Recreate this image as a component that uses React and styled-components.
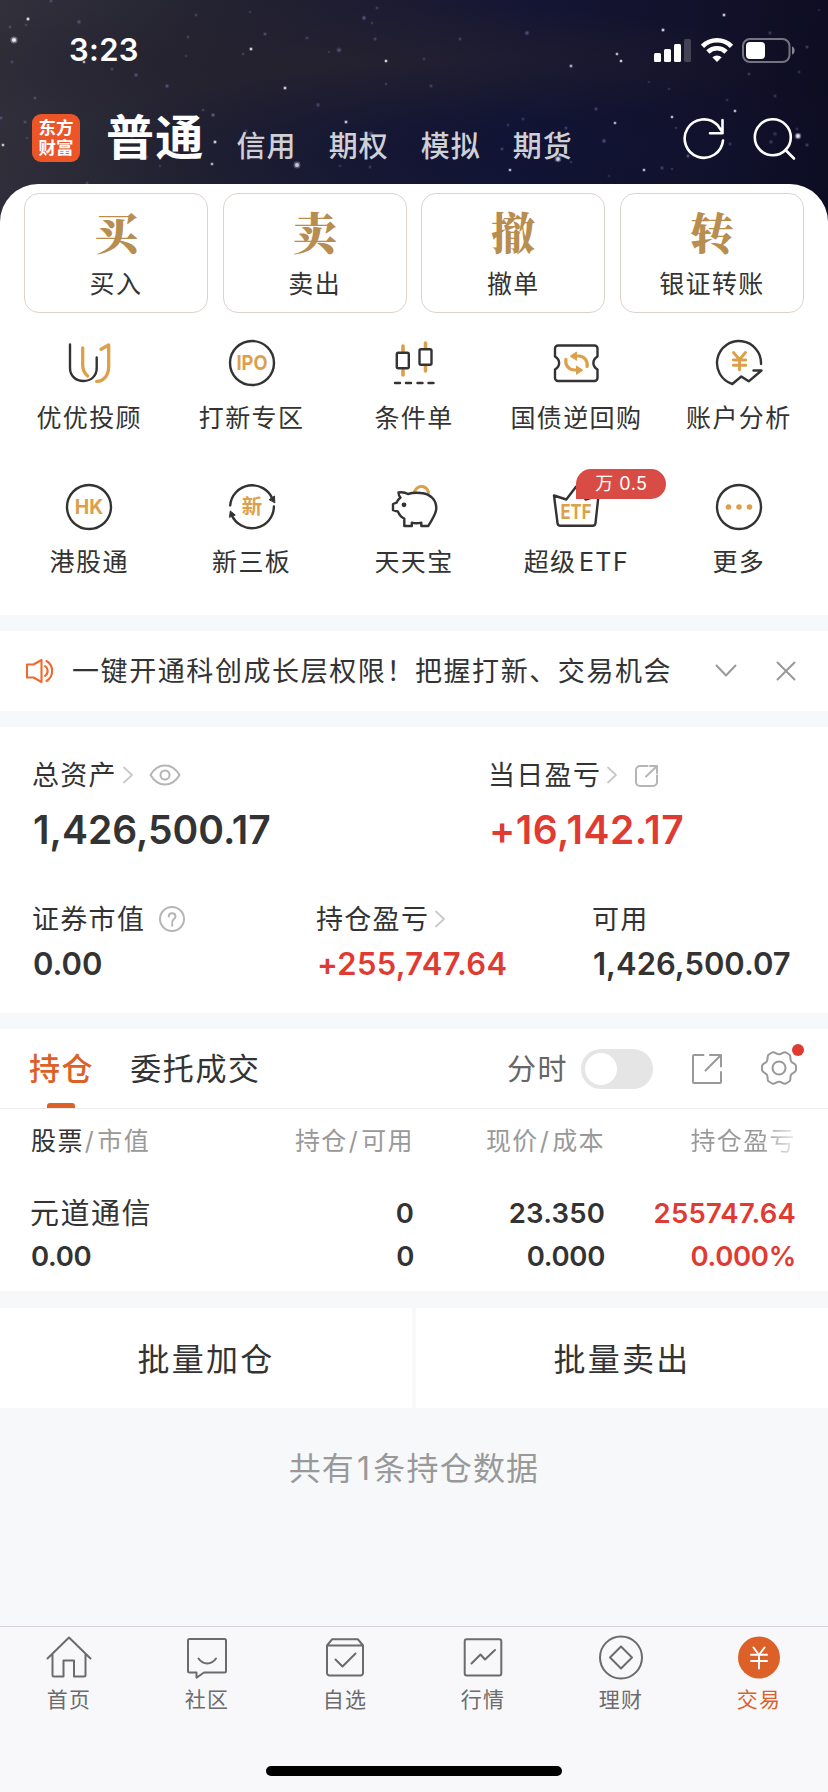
import React from "react";
import styled, { createGlobalStyle, css } from "styled-components";

// Data
const accounts = ["信用", "期权", "模拟", "期货"];

const trades = [
  { mark: "买", label: "买入" },
  { mark: "卖", label: "卖出" },
  { mark: "撤", label: "撤单" },
  { mark: "转", label: "银证转账" },
];

const services = [
  { icon: "advisor", label: "优优投顾" },
  { icon: "ipo", label: "打新专区" },
  { icon: "candle", label: "条件单" },
  { icon: "bond", label: "国债逆回购" },
  { icon: "analysis", label: "账户分析" },
  { icon: "hk", label: "港股通" },
  { icon: "neeq", label: "新三板" },
  { icon: "piggy", label: "天天宝" },
  { icon: "etf", label: "超级 ETF", badge: "万 0.5" },
  { icon: "more", label: "更多" },
];

const navItems = [
  { icon: "home", label: "首页" },
  { icon: "community", label: "社区" },
  { icon: "watchlist", label: "自选" },
  { icon: "market", label: "行情" },
  { icon: "wealth", label: "理财" },
  { icon: "trade", label: "交易", active: true },
];

// x, y, radius, opacity
const stars = [
  [14, 40, 3, 0.95], [28, 19, 1.7, 0.9], [10, 27, 1.6, 0.4], [26, 25, 1.5, 0.35],
  [51, 1, 1.8, 0.4], [79, 22, 2, 0.45], [12, 62, 1.7, 0.35], [84, 62, 1.5, 0.8],
  [112, 69, 1.6, 0.4], [136, 75, 1.9, 0.5], [167, 86, 1.9, 0.5], [35, 98, 1.7, 0.4],
  [188, 37, 1.6, 0.4], [196, 15, 1.6, 0.35], [186, 56, 1.4, 0.3], [251, 49, 1.6, 0.95],
  [243, 54, 1.5, 0.35], [250, 12, 1.5, 0.3], [265, 34, 1.7, 0.45], [285, 88, 1.6, 0.95],
  [307, 38, 1.6, 0.4], [339, 50, 2.3, 0.5], [329, 52, 1.3, 0.3], [364, 18, 2, 0.55],
  [377, 8, 1.6, 0.4], [372, 23, 1.4, 0.35], [386, 61, 1.5, 1], [375, 39, 1.7, 0.4],
  [386, 84, 1.5, 0.35], [318, 105, 2, 0.4], [346, 122, 1.6, 0.9], [213, 115, 1.9, 0.6],
  [203, 110, 1.5, 0.4], [215, 142, 1.6, 0.95], [212, 164, 1.5, 0.8], [297, 165, 2.9, 0.8],
  [371, 134, 2.6, 0.5], [132, 137, 1.7, 0.35], [147, 157, 1.6, 0.3], [3, 145, 1.5, 0.9],
  [1, 118, 1.8, 0.4], [25, 122, 1.8, 0.35], [27, 138, 1.5, 0.3], [160, 166, 1.4, 0.3],
  [246, 131, 1.8, 0.35], [340, 166, 1.5, 0.3], [370, 167, 1.7, 0.3], [527, 33, 2.1, 0.5],
  [460, 39, 1.8, 0.35], [424, 59, 1.6, 0.3], [431, 86, 1.8, 0.35], [617, 54, 1.5, 0.85],
  [621, 61, 1.5, 0.95], [571, 66, 1.6, 0.75], [663, 30, 1.6, 0.95], [724, 15, 1.6, 0.9],
  [770, 33, 1.9, 0.35], [807, 47, 1.7, 0.4], [819, 10, 1.4, 0.2], [749, 74, 1.7, 0.35],
  [799, 72, 1.7, 0.3], [669, 89, 1.5, 0.3], [649, 82, 1.4, 0.25], [596, 109, 1.9, 0.4],
  [523, 119, 1.6, 0.35], [508, 125, 1.6, 0.35], [566, 128, 1.7, 0.4], [615, 123, 1.5, 0.8],
  [672, 117, 1.5, 0.85], [735, 111, 1.5, 0.85], [676, 128, 1.5, 0.3], [775, 96, 1.8, 0.3],
  [727, 100, 1.6, 0.3], [604, 141, 2, 0.5], [688, 156, 1.7, 0.6], [558, 159, 2.7, 0.85],
  [502, 149, 1.7, 0.4], [510, 170, 1.5, 0.85], [644, 170, 1.5, 0.85], [662, 168, 1.8, 0.4],
  [672, 169, 1.5, 0.3], [798, 136, 2.8, 0.9], [775, 134, 2, 0.3], [771, 142, 2, 0.35],
  [807, 145, 1.9, 0.4], [797, 129, 1.6, 0.3], [730, 144, 1.7, 0.35], [571, 162, 1.5, 0.3],
  [609, 176, 1.7, 0.2], [87, 183, 1.5, 0.4],
];

const dark = "#333";
const gold = "#dda04a";

const Stars = () => (
  <Sky viewBox="0 0 828 240">
    {stars.map(([x, y, r, o]) => (
      <g key={`${x}-${y}`} fill={o > 0.6 ? "#f1f1ff" : "#8078b8"} opacity={o}>
        <circle cx={x} cy={y} r={r * 0.7} />
        <circle cx={x} cy={y} r={r * 1.2} opacity={0.35} />
      </g>
    ))}
  </Sky>
);

const GoldText = ({ y, width, children }) => (
  <text
    x="24"
    y={y}
    fill={gold}
    stroke="none"
    fontSize="20"
    fontWeight="700"
    textAnchor="middle"
    textLength={width}
    lengthAdjust="spacingAndGlyphs"
  >
    {children}
  </text>
);

const serviceIcons = {
  advisor: (
    <>
      <path d="M5 5.5V29c0 8 6 13 13.5 13S31.700 37 31.700 29V18.500" />
      <path stroke={gold} strokeWidth="3.300" d="M17.700 9v17c0 5 2 8.500 5 11M36 10.300l7.700-4.300v21c0 9-4.500 15-12 15.400" />
    </>
  ),
  ipo: (
    <>
      <circle cx="24" cy="24" r="22" />
      <GoldText y="31.300" width="31">IPO</GoldText>
    </>
  ),
  candle: (
    <>
      <path stroke={gold} strokeWidth="3.600" d="M13 7v5M13 31v5M35.500 4v5M35.500 27v5" />
      <rect x="6.800" y="13.800" width="12" height="15.500" rx="1.500" />
      <rect x="29.500" y="10.300" width="12" height="15.500" rx="1.500" />
      <path d="M5 44h5M16 44h5M27.500 44h5M38.500 44h5" />
    </>
  ),
  bond: (
    <>
      <path d="M6 6.500h36.500a3 3 0 0 1 3 3v8c-5.500 3.500-5.500 9.500 0 13v8.500a3 3 0 0 1-3 3H6a3 3 0 0 1-3-3v-8.500c5.500-3.500 5.500-9.500 0-13v-8a3 3 0 0 1 3-3z" />
      <path stroke={gold} strokeWidth="3.200" d="M21 17h5.500a8.500 8.500 0 0 1 8.500 10.500M28 31h-5.500a8.500 8.500 0 0 1-8.500-10.500" />
      <path fill={gold} stroke={gold} strokeWidth="1" d="M18.500 17l6-4v8zM30.500 31l-6-4v8z" />
    </>
  ),
  analysis: (
    <>
      <path d="M46 25A22 22 0 1 0 17.300 45l9-7.500 7.400 4.800L46.500 31.500H38.500" />
      <path stroke={gold} strokeWidth="2.900" d="M18.500 13.500l6 7 6-7M18.300 21h12.500M18.300 26.300h12.500M24.500 21v10" />
    </>
  ),
  hk: (
    <>
      <circle cx="24" cy="24" r="22" />
      <GoldText y="31.300" width="28.500">HK</GoldText>
    </>
  ),
  neeq: (
    <>
      <path d="M2.200 22.500A22 22 0 0 1 44.500 16M45.900 23.500A22 22 0 0 1 3.500 31.500" />
      <path fill={dark} strokeWidth="1" d="M41.500 16.500l5-3.500.3 6.500zM1.500 34l.8-6 4.700 3.800z" />
      <GoldText y="31.200" width="20.500">新</GoldText>
    </>
  ),
  piggy: (
    <>
      <path stroke={gold} strokeWidth="3" d="M24.500 8.500c3.500-7 12-6.500 14 1" />
      <path d="M8.500 9.500c4-.5 7 0 9.500 1.500 4-1.300 9-1.500 13-1 9 .8 15.300 6.500 15.300 15.300 0 6-4.300 10.700-8 17.700h-7v-3.300c-3.500.8-6.500.8-9.500 0V43h-7.500v-7.500c-3-1.200-5-3.800-6.300-6.800L3 27v-6l3.500-1.300c1-2.200 2.200-3.700 4-5.200-1.500-1.500-2-3-2-5z" />
      <circle cx="14" cy="21.800" r="2.400" fill={dark} stroke="none" />
    </>
  ),
  etf: (
    <>
      <path d="M2 12.500l12.300 4L24 3.700l9.700 12.800 12.800-4-3 27.500a3 3 0 0 1-3 2.800h-32a3 3 0 0 1-3-2.800z" />
      <GoldText y="36" width="31">ETF</GoldText>
    </>
  ),
  more: (
    <>
      <circle cx="24" cy="24" r="22" />
      <g fill={gold} stroke="none">
        <circle cx="13.500" cy="24" r="2.800" />
        <circle cx="24" cy="24" r="2.800" />
        <circle cx="34.500" cy="24" r="2.800" />
      </g>
    </>
  ),
};

const navIcons = {
  home: (
    <path d="M2.500 23.500L24 2.500l21.500 21M7.500 19v21a1.500 1.500 0 0 0 1.500 1.500h9.500V25.500h10.500V41.500H39a1.500 1.500 0 0 0 1.500-1.500V19" />
  ),
  community: (
    <path d="M6.500 4h35a1.500 1.500 0 0 1 1.500 1.500v30.500a1.500 1.500 0 0 1-1.500 1.500H21l-7.500 5.200v-5.200h-7A1.500 1.500 0 0 1 5 36V5.500A1.500 1.500 0 0 1 6.500 4zM15.500 23.500c4.500 6.500 13 6.500 17.500 0" />
  ),
  watchlist: (
    <path d="M6 10.500V38a2.500 2.500 0 0 0 2.500 2.500h31A2.500 2.500 0 0 0 42 38V10.500L37 4.300H11L6 10.500h36M14.500 24.500l7 7L34.500 18.500" />
  ),
  market: (
    <>
      <rect x="5.700" y="4.300" width="36.600" height="36.300" rx="2" />
      <path d="M12.500 28.500l9-9 4.500 5 10-9.500" />
    </>
  ),
  wealth: (
    <>
      <circle cx="24" cy="22.500" r="21" />
      <path d="M24 11.500l11 11-11 11-11-11z" />
    </>
  ),
  trade: (
    <>
      <circle cx="24" cy="22.500" r="21" fill="#dc6027" stroke="none" />
      <path stroke="#fff" d="M18.500 12.500l5.500 7.500 5.500-7.500M16 19.800h16M16 26h16M24 20v13.500" />
    </>
  ),
};

const Chevron = () => (
  <Line width="12" height="18" $color="#c9c9c9" $weight={1.8}>
    <path d="M2 1.500l8 7.500-8 7.500" />
  </Line>
);

const StatusBar = () => (
  <Status>
    <Time>3:23</Time>
    <svg width="143" height="28" fill="#fff">
      <rect x="1" y="17" width="7" height="9" rx="1.500" />
      <rect x="11" y="13" width="7" height="13" rx="1.500" />
      <rect x="21" y="8" width="7" height="18" rx="1.500" />
      <rect x="31" y="3" width="7" height="23" rx="1.500" opacity="0.200" />
      <g fill="none" stroke="#fff" strokeWidth="4.600">
        <path d="M49.500 10.300a20.500 20.500 0 0 1 29 0" />
        <path d="M54.900 16a13 13 0 0 1 18.200 0" />
      </g>
      <path d="M59.300 21.200a7 7 0 0 1 9.400 0L64 26z" />
      <rect x="90" y="3" width="46.500" height="23" rx="7" fill="none" stroke="#fff" strokeOpacity="0.420" strokeWidth="2" />
      <rect x="93" y="6" width="19" height="17" rx="4" />
      <path d="M139 10.500c3.500 1 3.500 7 0 8z" opacity="0.500" />
    </svg>
  </Status>
);

const App = () => {
  return (
    <Page>
      <GlobalStyle />
      <Hero>
        <Stars />
        <StatusBar />
        <Header>
          <Logo>
            <span>东方</span>
            <span>财富</span>
          </Logo>
          <Current>普通</Current>
          <Accounts>
            {accounts.map((name) => (
              <span key={name}>{name}</span>
            ))}
          </Accounts>
          <Actions>
            <Line width="44" height="44" $color="#fff" $weight={2.6}>
              <path d="M41 23.500A19.200 19.200 0 1 1 35.500 8l4.500 6.500M40.500 3v13.300H28" />
            </Line>
            <Line width="44" height="44" $color="#fff" $weight={2.6}>
              <circle cx="20.800" cy="20.300" r="18" />
              <path d="M33.500 33l8.500 8.500" />
            </Line>
          </Actions>
        </Header>
      </Hero>

      <Sheet>
        <Trades>
          {trades.map(({ mark, label }) => (
            <TradeCard key={mark}>
              <Mark>{mark}</Mark>
              <Label>{label}</Label>
            </TradeCard>
          ))}
        </Trades>
        <Services>
          {services.map(({ icon, label, badge }) => (
            <Service key={icon}>
              <IconBox>
                <Line width="48" height="48" $color={dark} $weight={2.4}>
                  {serviceIcons[icon]}
                </Line>
                {badge && <Badge>{badge}</Badge>}
              </IconBox>
              <Label>{label}</Label>
            </Service>
          ))}
        </Services>
      </Sheet>

      <Notice>
        <Line width="30" height="26" $color="#ee6a30" $weight={2.1}>
          <path d="M2 6.500h6.500L16.500 2v22L8.500 19.500H2zM20 8c3.500 2.500 3.500 7.500 0 10M21.500 3c7.500 4.500 7.500 15.500 0 20" />
        </Line>
        <p>一键开通科创成长层权限！把握打新、交易机会</p>
        <Line width="22" height="14" $color="#999" $weight={2}>
          <path d="M1.500 1.500L11 11.500l9.500-10" />
        </Line>
        <Line width="20" height="20" $color="#999" $weight={2}>
          <path d="M1.500 1.500l17 17M18.500 1.500l-17 17" />
        </Line>
      </Notice>

      <Assets>
        <AssetRow $columns="456px 1fr">
          <Asset>
            <AssetLabel>
              <span>总资产</span>
              <Chevron />
              <Line width="32" height="22" $color="#b5b5b5" $weight={2}>
                <path d="M1.500 11C5 5 10 1.500 16 1.500S27 5 30.500 11C27 17 22 20.500 16 20.500S5 17 1.500 11z" />
                <circle cx="16" cy="11" r="4.500" />
              </Line>
            </AssetLabel>
            <Amount $large>1,426,500.17</Amount>
          </Asset>
          <Asset>
            <AssetLabel>
              <span>当日盈亏</span>
              <Chevron />
              <Line width="28" height="26" $color="#b5b5b5" $weight={2}>
                <path d="M14.500 4H7a4 4 0 0 0-4 4v12a4 4 0 0 0 4 4h13a4 4 0 0 0 4-4v-6.500M13 14.500L23.500 4.500M17 4h7v7" />
              </Line>
            </AssetLabel>
            <Amount $large $up>+16,142.17</Amount>
          </Asset>
        </AssetRow>
        <AssetRow $columns="284px 276px 1fr">
          <Asset>
            <AssetLabel>
              <span>证券市值</span>
              <Help width="28" height="28" $color="#b5b5b5" $weight={2}>
                <circle cx="14" cy="14" r="12" />
                <path d="M10.800 11.500c0-4.300 6.700-4.300 6.700 0 0 2.500-3.300 2.700-3.300 5.700M14.200 19v1.800" />
              </Help>
            </AssetLabel>
            <Amount>0.00</Amount>
          </Asset>
          <Asset>
            <AssetLabel>
              <span>持仓盈亏</span>
              <Chevron />
            </AssetLabel>
            <Amount $up>+255,747.64</Amount>
          </Asset>
          <Asset>
            <AssetLabel>
              <span>可用</span>
            </AssetLabel>
            <Amount>1,426,500.07</Amount>
          </Asset>
        </AssetRow>
      </Assets>

      <Holdings>
        <Tabs>
          <Tab $active>持仓</Tab>
          <Tab>委托成交</Tab>
          <Tools>
            <ToolLabel>分时</ToolLabel>
            <Switch />
            <Line width="32" height="32" $color="#999" $weight={2}>
              <path d="M12.500 2H3a1 1 0 0 0-1 1v26a1 1 0 0 0 1 1h26a1 1 0 0 0 1-1V19M14.500 17.500L29.500 2.500M19 2h11v11.500" />
            </Line>
            <Settings>
              <Line width="38" height="38" $color="#999" $weight={2}>
                <path d="M12.200 2.500c2.600-1.200 3.600 1.700 6.800 1.700s4.200-2.900 6.800-1.700l3.400 2c2.300 1.700.3 4 1.900 6.700s4.600 2.100 4.900 4.900v3.800c-.3 2.800-3.300 2.200-4.900 4.900s.4 5-1.900 6.700l-3.400 2c-2.600 1.200-3.600-1.700-6.800-1.700s-4.200 2.900-6.800 1.700l-3.400-2c-2.300-1.700-.3-4-1.900-6.700s-4.600-2.100-4.900-4.900v-3.800c.3-2.800 3.300-2.200 4.900-4.900s-.4-5 1.900-6.700z" />
                <circle cx="19" cy="18" r="6.500" />
              </Line>
              <Dot />
            </Settings>
          </Tools>
        </Tabs>
        <HeadRow>
          <span>
            <b>股票</b>
            <i>/</i>市值
          </span>
          <span>
            持仓<i>/</i>可用
          </span>
          <span>
            现价<i>/</i>成本
          </span>
          <Faded>持仓盈亏</Faded>
        </HeadRow>
        <Stock>
          <StockName>元道通信</StockName>
          <span>0</span>
          <span>23.350</span>
          <Rise>255747.64</Rise>
          <span>0.00</span>
          <span>0</span>
          <span>0.000</span>
          <Rise>0.000%</Rise>
        </Stock>
      </Holdings>

      <Batch>
        <button>批量加仓</button>
        <button>批量卖出</button>
      </Batch>
      <Summary>
        共有<span>1</span>条持仓数据
      </Summary>

      <Nav>
        <NavList>
          {navItems.map(({ icon, label, active }) => (
            <NavItem key={icon} $active={active}>
              <Line width="48" height="46" $color="#6b6b6e" $weight={2}>
                {navIcons[icon]}
              </Line>
              {label}
            </NavItem>
          ))}
        </NavList>
        <HomeIndicator />
      </Nav>
    </Page>
  );
};

const GlobalStyle = createGlobalStyle`
  * {
    box-sizing: border-box;
  }

  body {
    margin: 0;
    background: #f7f8fa;
  }

  body, button {
    font-family: Inter, "Noto Sans CJK SC", sans-serif;
  }

  svg {
    display: block;
    flex: none;
  }
`;

const Page = styled.div`
  background: #f7f8fa;
  color: #333;
  display: flex;
  flex-direction: column;
  height: 1792px;
  overflow: hidden;
  width: 828px;
`;

const Line = styled.svg`
  fill: none;
  stroke: ${({ $color }) => $color};
  stroke-linecap: round;
  stroke-linejoin: round;
  stroke-width: ${({ $weight }) => $weight};
`;

const Sky = styled.svg`
  inset: 0 0 auto;
  position: absolute;
`;

const Hero = styled.header`
  background: radial-gradient(ellipse 420px 90px at 500px 150px, rgba(15, 19, 52, 0.7), transparent),
    radial-gradient(ellipse 460px 65px at 330px 65px, rgba(38, 34, 46, 0.8), transparent),
    linear-gradient(100deg, #31303b 0%, #242331 24%, #1a1a33 48%, #141534 62%, #12112a 82%, #0c0c20 100%);
  flex: none;
  height: 240px;
  margin-bottom: -56px;
  position: relative;
`;

const Status = styled.div`
  align-items: center;
  display: flex;
  height: 100px;
  justify-content: space-between;
  padding: 0 32px 0 69px;
  position: relative;
`;

const Time = styled.span`
  color: #fff;
  font-size: 31px;
  font-weight: 600;
  letter-spacing: 0.3px;
  line-height: 40px;
`;

const Header = styled.div`
  align-items: center;
  display: flex;
  height: 76px;
  padding: 0 32px;
  position: relative;
`;

const Logo = styled.div`
  background: #ec5528;
  border-radius: 9px;
  color: #fff;
  display: grid;
  font-size: 17.500px;
  font-weight: 700;
  height: 48px;
  line-height: 19px;
  padding: 4px 0 5px;
  text-align: center;
  width: 48px;
`;

const Current = styled.h1`
  color: #fff;
  font-size: 48px;
  font-weight: 600;
  letter-spacing: 1.300px;
  line-height: 56px;
  margin: 0 0 0 26px;
`;

const Accounts = styled.div`
  color: #cfcfd6;
  display: flex;
  font-size: 29px;
  font-weight: 500;
  gap: 32px;
  letter-spacing: 1px;
  line-height: 36px;
  padding: 17px 0 0 32px;
`;

const Actions = styled.div`
  display: flex;
  gap: 26px;
  margin-left: auto;
  padding-top: 2px;
`;

const Sheet = styled.section`
  background: #fff;
  border-radius: 38px 38px 0 0;
  flex: none;
  height: 431px;
  padding-top: 9px;
  position: relative;
`;

const Trades = styled.div`
  display: grid;
  gap: 14.600px;
  grid-template-columns: repeat(4, 1fr);
  padding: 0 24px;
`;

const TradeCard = styled.div`
  align-items: center;
  border: 1px solid #dcd2cc;
  border-radius: 15px;
  display: flex;
  flex-direction: column;
  gap: 15px;
  height: 120px;
  padding-top: 15px;
`;

const Mark = styled.strong`
  color: #b88d50;
  font-family: "Noto Serif CJK SC", "Source Han Serif SC", "Liberation Serif", "Noto Sans CJK SC", serif;
  font-size: 44px;
  font-weight: 900;
  line-height: 44px;
`;

const Label = styled.span`
  font-size: 25px;
  letter-spacing: 1.400px;
  line-height: 32px;
  white-space: nowrap;
  word-spacing: -6px;
`;

const Services = styled.div`
  display: grid;
  grid-auto-rows: 144px;
  grid-template-columns: repeat(5, 1fr);
  padding: 26px 8px 0;
`;

const Service = styled.div`
  align-items: center;
  display: flex;
  flex-direction: column;
  gap: 15px;
`;

const IconBox = styled.div`
  position: relative;
`;

const Badge = styled.span`
  background: #d94b45;
  border-radius: 15px 15px 15px 0;
  color: #fff;
  font-size: 18px;
  height: 30px;
  left: 24px;
  letter-spacing: 0.500px;
  line-height: 30px;
  position: absolute;
  text-align: center;
  top: -14px;
  width: 90px;
`;

const Notice = styled.section`
  align-items: center;
  background: #fff;
  display: flex;
  flex: none;
  height: 80px;
  margin-top: 16px;
  padding: 0 32px 0 25px;

  p {
    flex: 1;
    font-size: 27px;
    letter-spacing: 1.580px;
    line-height: 40px;
    margin: 1px 0 0 17px;
    white-space: nowrap;
  }

  svg:last-child {
    margin-left: 39px;
  }
`;

const Assets = styled.section`
  background: #fff;
  display: flex;
  flex: none;
  flex-direction: column;
  gap: 41px;
  height: 286px;
  margin-top: 16px;
  padding: 28px 0 0 33px;
`;

const AssetRow = styled.div`
  display: grid;
  grid-template-columns: ${({ $columns }) => $columns};
`;

const Asset = styled.div`
  white-space: nowrap;
`;

const AssetLabel = styled.div`
  align-items: center;
  display: flex;
  font-size: 27px;
  height: 40px;
  letter-spacing: 1.300px;
  line-height: 40px;

  span {
    padding-top: 2px;
    margin-left: -1px;
  }

  svg {
    margin-left: 5px;
  }

  svg + svg {
    margin-left: 15px;
  }
`;

const Help = styled(Line)`
  && {
    margin-left: 13px;
  }
`;

const Amount = styled.div`
  color: ${({ $up }) => ($up ? "#e03b33" : "#333")};
  font-size: ${({ $large }) => ($large ? "39px" : "31px")};
  font-weight: 600;
  letter-spacing: ${({ $large, $up }) => ($up ? ($large ? "0.5px" : "0.3px") : "0")};
  line-height: ${({ $large }) => ($large ? "56px" : "44px")};
  margin-top: ${({ $large }) => ($large ? "7px" : "3px")};
`;

const Holdings = styled.section`
  background: #fff;
  flex: none;
  height: 262px;
  margin-top: 16px;
`;

const Tabs = styled.div`
  align-items: center;
  border-bottom: 1px solid #ebebeb;
  display: flex;
  gap: 36px;
  height: 80px;
  padding: 0 30px 0 29px;
`;

const Tab = styled.div`
  color: ${({ $active }) => ($active ? "#dc6027" : "#333")};
  font-size: 31px;
  font-weight: ${({ $active }) => ($active ? 500 : 400)};
  height: 79px;
  letter-spacing: 1.600px;
  line-height: 79px;

  ${({ $active }) =>
    $active &&
    css`
      &::after {
        background: #dc6027;
        border-radius: 3px 3px 0 0;
        content: "";
        display: block;
        height: 5px;
        margin: -5px 0 0 18px;
        width: 28px;
      }
    `}
`;

const Tools = styled.div`
  align-items: center;
  display: flex;
  margin-left: auto;
`;

const ToolLabel = styled.span`
  color: #666;
  font-size: 29px;
  letter-spacing: 1.500px;
  line-height: 40px;
  padding-top: 2px;
`;

const Switch = styled.div`
  background: #e5e5e5;
  border-radius: 20px;
  height: 40px;
  margin: 0 38px 0 13px;
  padding: 4px;
  width: 72px;

  &::before {
    background: #fff;
    border-radius: 50%;
    content: "";
    display: block;
    height: 32px;
    width: 32px;
  }
`;

const Settings = styled.div`
  margin-left: 37px;
  position: relative;
`;

const Dot = styled.i`
  background: #e03b33;
  border-radius: 50%;
  height: 12px;
  position: absolute;
  right: -6px;
  top: -6px;
  width: 12px;
`;

const row = css`
  display: grid;
  grid-template-columns: 192px 191px 191px 191px;
  padding: 0 32px 0 31px;
  text-align: right;

  > :nth-child(4n + 1) {
    text-align: left;
  }
`;

const HeadRow = styled.div`
  ${row}
  color: #999;
  font-size: 25px;
  height: 64px;
  letter-spacing: 1.400px;
  line-height: 65px;

  b {
    color: #333;
    font-weight: 400;
  }

  i {
    font-style: normal;
    margin: 0 2px 0 1px;
  }
`;

const Faded = styled.span`
  background: linear-gradient(90deg, #999 82%, #eee 100%);
  background-clip: text;
  color: transparent;
`;

const Stock = styled.div`
  ${row}
  font-size: 27.500px;
  font-weight: 600;
  letter-spacing: 0.200px;
  line-height: 43px;
  padding-top: 19px;

  > :nth-child(n + 5) {
    letter-spacing: -0.300px;
  }
`;

const StockName = styled.span`
  font-size: 29px;
  font-weight: 400;
  letter-spacing: 1.500px;
  margin-left: -1px;
`;

const Rise = styled.span`
  color: #e03b33;
`;

const Batch = styled.div`
  display: grid;
  flex: none;
  gap: 4px;
  grid-template-columns: 1fr 1fr;
  height: 100px;
  margin-top: 17px;

  button {
    background: #fff;
    border: 0;
    color: #333;
    font-size: 32px;
    letter-spacing: 2.200px;
    line-height: 40px;
    padding: 3px 0 0;
  }
`;

const Summary = styled.p`
  color: #999;
  font-size: 32px;
  letter-spacing: 1.200px;
  line-height: 40px;
  margin: 41px 0 0;
  text-align: center;

  span {
    margin: 0 2px;
  }
`;

const Nav = styled.nav`
  background: #f8f8fb;
  border-top: 1px solid #d4d4d8;
  height: 166px;
  margin-top: auto;
  padding-top: 8px;
`;

const NavList = styled.div`
  display: grid;
  grid-template-columns: repeat(6, 1fr);
`;

const NavItem = styled.div`
  align-items: center;
  color: ${({ $active }) => ($active ? "#dc6027" : "#6b6b6e")};
  display: flex;
  flex-direction: column;
  font-size: 21px;
  gap: 5px;
  letter-spacing: 1.300px;
  line-height: 28px;
`;

const HomeIndicator = styled.div`
  background: #000;
  border-radius: 5px;
  height: 10px;
  margin: 52px auto 0;
  width: 296px;
`;

export default App;
